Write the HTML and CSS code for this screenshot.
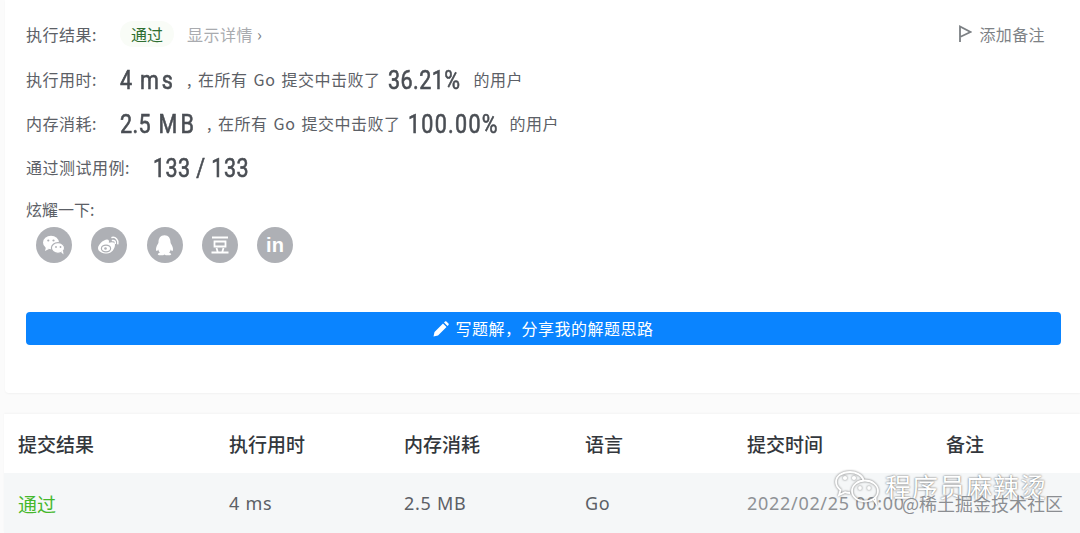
FILE: index.html
```html
<!DOCTYPE html>
<html lang="zh-CN">
<head>
    <meta charset="UTF-8">
    <title>提交结果</title>
    <link rel="stylesheet" href="styles.css">
</head>
<body>
    <div class="result-card">
        <div class="row row-first">
            <span class="label">执行结果:</span>
            <span class="pass-tag">通过</span>
            <a class="details" href="#">显示详情 <span class="chevron">›</span></a>
            <a class="note" href="#">
                <svg width="14" height="18" viewBox="0 0 14 18"><path d="M2 17V1.500L12.500 7 2 12" fill="none" stroke="#7c8084" stroke-width="1.800"/></svg>
                添加备注
            </a>
        </div>
        <div class="row row-time">
            <span class="label">执行用时:</span>
            <span class="big big-time">4 <span class="unit">ms</span></span>
            <span class="text">, 在所有 Go 提交中击败了</span>
            <span class="big big-pct">36.21%</span>
            <span class="text">的用户</span>
        </div>
        <div class="row row-mem">
            <span class="label">内存消耗:</span>
            <span class="big big-mem">2.5 <span class="unit">MB</span></span>
            <span class="text">, 在所有 Go 提交中击败了</span>
            <span class="big big-pct-full">100.00%</span>
            <span class="text">的用户</span>
        </div>
        <div class="row row-cases">
            <span class="label label-cases">通过测试用例:</span>
            <span class="big">133 / 133</span>
        </div>
        <div class="share-title">炫耀一下:</div>
        <div class="share-icons">
            <span class="share-icon">
                <svg width="24" height="22" viewBox="0 0 24 22" fill="#fff">
                    <ellipse cx="9" cy="8.500" rx="8" ry="6.800"/>
                    <path d="M4 13l-1 4 4-2z"/>
                    <ellipse cx="16" cy="14" rx="6.600" ry="5.400" stroke="#aeb0b5" stroke-width="1.200"/>
                    <path d="M19 18l2.500 2.500-.5-4z"/>
                    <circle cx="6.300" cy="6.500" r="1.100" fill="#aeb0b5"/>
                    <circle cx="11.500" cy="6.500" r="1.100" fill="#aeb0b5"/>
                    <circle cx="14" cy="13" r=".9" fill="#aeb0b5"/>
                    <circle cx="18.500" cy="13" r=".9" fill="#aeb0b5"/>
                </svg>
            </span>
            <span class="share-icon">
                <svg width="26" height="22" viewBox="0 0 26 22" fill="none">
                    <path d="M11 19.500c-5 0-9-2.200-9-5.300 0-3.400 5.500-8.700 9-8.700 2 0 2.300 1.700 1.800 3.300 3-1 6.200-.8 6.200 1.700 0 4.500-3.500 9-8 9z" fill="#fff"/>
                    <ellipse cx="10" cy="14.500" rx="4.600" ry="3.400" stroke="#aeb0b5" stroke-width="1.200"/>
                    <circle cx="9.500" cy="14.500" r="1.300" fill="#aeb0b5"/>
                    <path d="M16 3.500c3.500-.8 6.800 2.500 5.800 6.300M16.500 6.500c1.800-.4 3.200 1 2.800 2.800" stroke="#fff" stroke-width="1.500" stroke-linecap="round"/>
                </svg>
            </span>
            <span class="share-icon">
                <svg width="23" height="24" viewBox="0 0 20 22" fill="#fff">
                    <path d="M10 2c3.800 0 5.500 3 5.500 6.500 0 1 1.300 2.300 2 4.500.600 2 .2 3.500-.4 3.500-.5 0-1-.7-1.400-1.400-.2 1.200-.8 2.200-1.500 2.900 1.300.4 2 1 2 1.500 0 .9-2 1-3.500 1-1.100 0-2-.3-2.700-.8-.7.500-1.600.8-2.700.8-1.500 0-3.500-.1-3.500-1 0-.5.700-1.100 2-1.500-.7-.7-1.300-1.700-1.500-2.900-.4.700-.9 1.400-1.400 1.400-.6 0-1-1.500-.4-3.500.7-2.200 2-3.500 2-4.500C4.500 5 6.200 2 10 2z"/>
                </svg>
            </span>
            <span class="share-icon">
                <svg width="20" height="20" viewBox="0 0 20 20" fill="none" stroke="#fff" stroke-width="1.800">
                    <path d="M2 2.500h16M4.500 6.500h11v5h-11zM6.500 13l1.200 4M13.500 13l-1.200 4M1.500 17.500h17"/>
                </svg>
            </span>
            <span class="share-icon share-in">in</span>
        </div>
        <button class="write-btn" type="button">
            <svg width="16" height="16" viewBox="0 0 16 16" fill="#fff"><path d="M0.500 15.500l1-4.500 8.500-8.500 3.500 3.500-8.500 8.500zM11 1.500l1-1c.5-.4 1-.4 1.400 0l2.100 2.100c.4.400.4.900 0 1.400l-1 1z"/></svg>
            <span class="btn-label">写题解，分享我的解题思路</span>
        </button>
    </div>

    <div class="submit-table">
        <div class="table-row table-head">
            <span>提交结果</span>
            <span>执行用时</span>
            <span>内存消耗</span>
            <span>语言</span>
            <span>提交时间</span>
            <span>备注</span>
        </div>
        <div class="table-row table-body">
            <span class="pass-text">通过</span>
            <span>4 ms</span>
            <span>2.5 MB</span>
            <span>Go</span>
            <span class="time-text">2022/02/25 00:00</span>
            <span></span>
        </div>
    </div>

    <div class="watermark">
        <svg class="wm-logo" width="46" height="36" viewBox="0 0 46 36" fill="none" stroke="#fff" stroke-width="1.800">
            <path d="M15 23c-2 0-3.500-.3-5-.8L4 25l1.500-5C2.500 17.500 1 15 1 12 1 6 7 2 15 2c6 0 12 3 13.500 8"/>
            <ellipse cx="30" cy="21" rx="13" ry="10.500"/>
            <path d="M38 29l3 4-.5-6"/>
            <circle cx="10" cy="8" r="1.200" fill="#fff"/>
            <circle cx="19" cy="8" r="1.200" fill="#fff"/>
            <circle cx="25" cy="18" r="1" fill="#fff"/>
            <circle cx="34" cy="18" r="1" fill="#fff"/>
        </svg>
        <span class="wm-name">程序员麻辣烫</span>
        <span class="wm-sub">@稀土掘金技术社区</span>
    </div>
</body>
</html>
```
FILE: styles.css
```css
* {
    box-sizing: border-box;
}
html, body {
    height: 533px;
    overflow: hidden;
}
body {
    margin: 0;
    background: #fbfbfb;
    font-family: "Noto Sans CJK SC", "Noto Sans", sans-serif;
    color: #5c6066;
    position: relative;
}
.result-card {
    margin-left: 5px;
    height: 393px;
    padding: 15px 0 0 21px;
    background: #fff;
    border-radius: 0 0 0 4px;
    box-shadow: 0 1px 2px rgba(0, 0, 0, 0.04);
}
.row {
    display: flex;
    align-items: center;
    height: 38px;
}
.row-first {
    padding-right: 35px;
}
.row-time {
    margin-top: 7px;
}
.row-mem,
.row-cases {
    margin-top: 6px;
}
.label {
    width: 94px;
    flex: none;
    font-size: 16px;
    letter-spacing: 0.5px;
    color: #5c6066;
}
.label-cases {
    width: 127px;
}
.pass-tag {
    width: 54px;
    height: 26px;
    line-height: 26px;
    text-align: center;
    font-size: 16px;
    color: #2f6f32;
    background: #f9fcf7;
    border-radius: 13px;
}
.details {
    margin-left: 13px;
    font-size: 16px;
    letter-spacing: 0.5px;
    color: #a9abaf;
    text-decoration: none;
}
.chevron {
    color: #7c8086;
}
.note {
    margin-left: auto;
    display: flex;
    align-items: center;
    gap: 7px;
    font-size: 16px;
    letter-spacing: 0.4px;
    color: #7e8286;
    text-decoration: none;
}
/* the numbers are a narrow DIN-like face, Roboto squeezed is the nearest */
.big {
    display: inline-block;
    padding-top: 2px;
    font-family: "Roboto", sans-serif;
    font-size: 25px;
    letter-spacing: 0.5px;
    color: #4a4e54;
    -webkit-text-stroke: 0.6px #4a4e54;
    white-space: pre;
    transform: scaleX(0.86);
    transform-origin: left center;
}
.unit {
    letter-spacing: 3.5px;
    margin-left: 2px;
}
.big-time {
    width: 67px;
    flex: none;
}
.big-mem {
    width: 87px;
    flex: none;
}
.big-pct {
    width: 85px;
    flex: none;
    margin-left: 8px;
}
.big-pct-full {
    width: 101px;
    flex: none;
    margin-left: 8px;
    letter-spacing: 1.5px;
}
.text {
    font-size: 16px;
    letter-spacing: 0.5px;
    word-spacing: 2px;
    color: #5c6066;
}
.share-title {
    margin-top: 11px;
    font-size: 16px;
    line-height: 24px;
    color: #5c6066;
}
.share-icons {
    display: flex;
    gap: 19.25px;
    margin: 6px 0 0 10px;
}
.share-icon {
    width: 36px;
    height: 36px;
    border-radius: 50%;
    background: #aeb0b5;
    display: flex;
    align-items: center;
    justify-content: center;
}
.share-in {
    color: #fff;
    font-family: "Liberation Sans", sans-serif;
    font-size: 20px;
    font-weight: 700;
}
.write-btn {
    display: flex;
    align-items: center;
    justify-content: center;
    gap: 6px;
    width: 1035px;
    height: 33px;
    margin-top: 49px;
    border: none;
    border-radius: 4px;
    background: #0a84ff;
    color: #fff;
    font-family: "Noto Sans CJK SC", sans-serif;
    font-size: 16px;
    letter-spacing: 0.5px;
}
.btn-label {
    margin-top: -2px;
}
.submit-table {
    margin: 21px 0 0 4px;
    background: #fff;
    box-shadow: 0 -1px 2px rgba(0, 0, 0, 0.03);
}
.table-row {
    display: grid;
    grid-template-columns: 211px 175px 181px 162px 199px 1fr;
    align-items: center;
    padding-left: 14px;
}
.table-head {
    height: 59px;
    font-size: 19px;
    font-weight: 500;
    color: #33373c;
}
.table-body {
    height: 60px;
    background: #f5f7f8;
    font-family: "Noto Sans", "Noto Sans CJK SC", sans-serif;
    font-size: 18px;
    letter-spacing: 0.7px;
    color: #5c6066;
    white-space: nowrap;
}
.pass-text {
    color: #45b82c;
    font-family: "Noto Sans CJK SC", sans-serif;
    font-size: 19px;
    letter-spacing: 0;
}
.time-text {
    color: #8f9296;
}
/* pasted over the shot, so it floats on top of the table row */
.watermark {
    position: absolute;
    left: 835px;
    top: 468px;
    width: 245px;
    height: 65px;
}
.wm-logo {
    position: absolute;
    left: 0;
    top: 2px;
    filter: drop-shadow(0 0 1px rgba(0, 0, 0, 0.55));
}
.wm-name {
    position: absolute;
    left: 50px;
    top: -1px;
    font-size: 26px;
    letter-spacing: 1px;
    white-space: nowrap;
    color: #fff;
    text-shadow: 0 0 2px rgba(0, 0, 0, 0.7);
}
.wm-sub {
    position: absolute;
    left: 67px;
    top: 22px;
    font-size: 18px;
    white-space: nowrap;
    color: #8b8e92;
    text-shadow: 0 0 1px #fff;
}
```
